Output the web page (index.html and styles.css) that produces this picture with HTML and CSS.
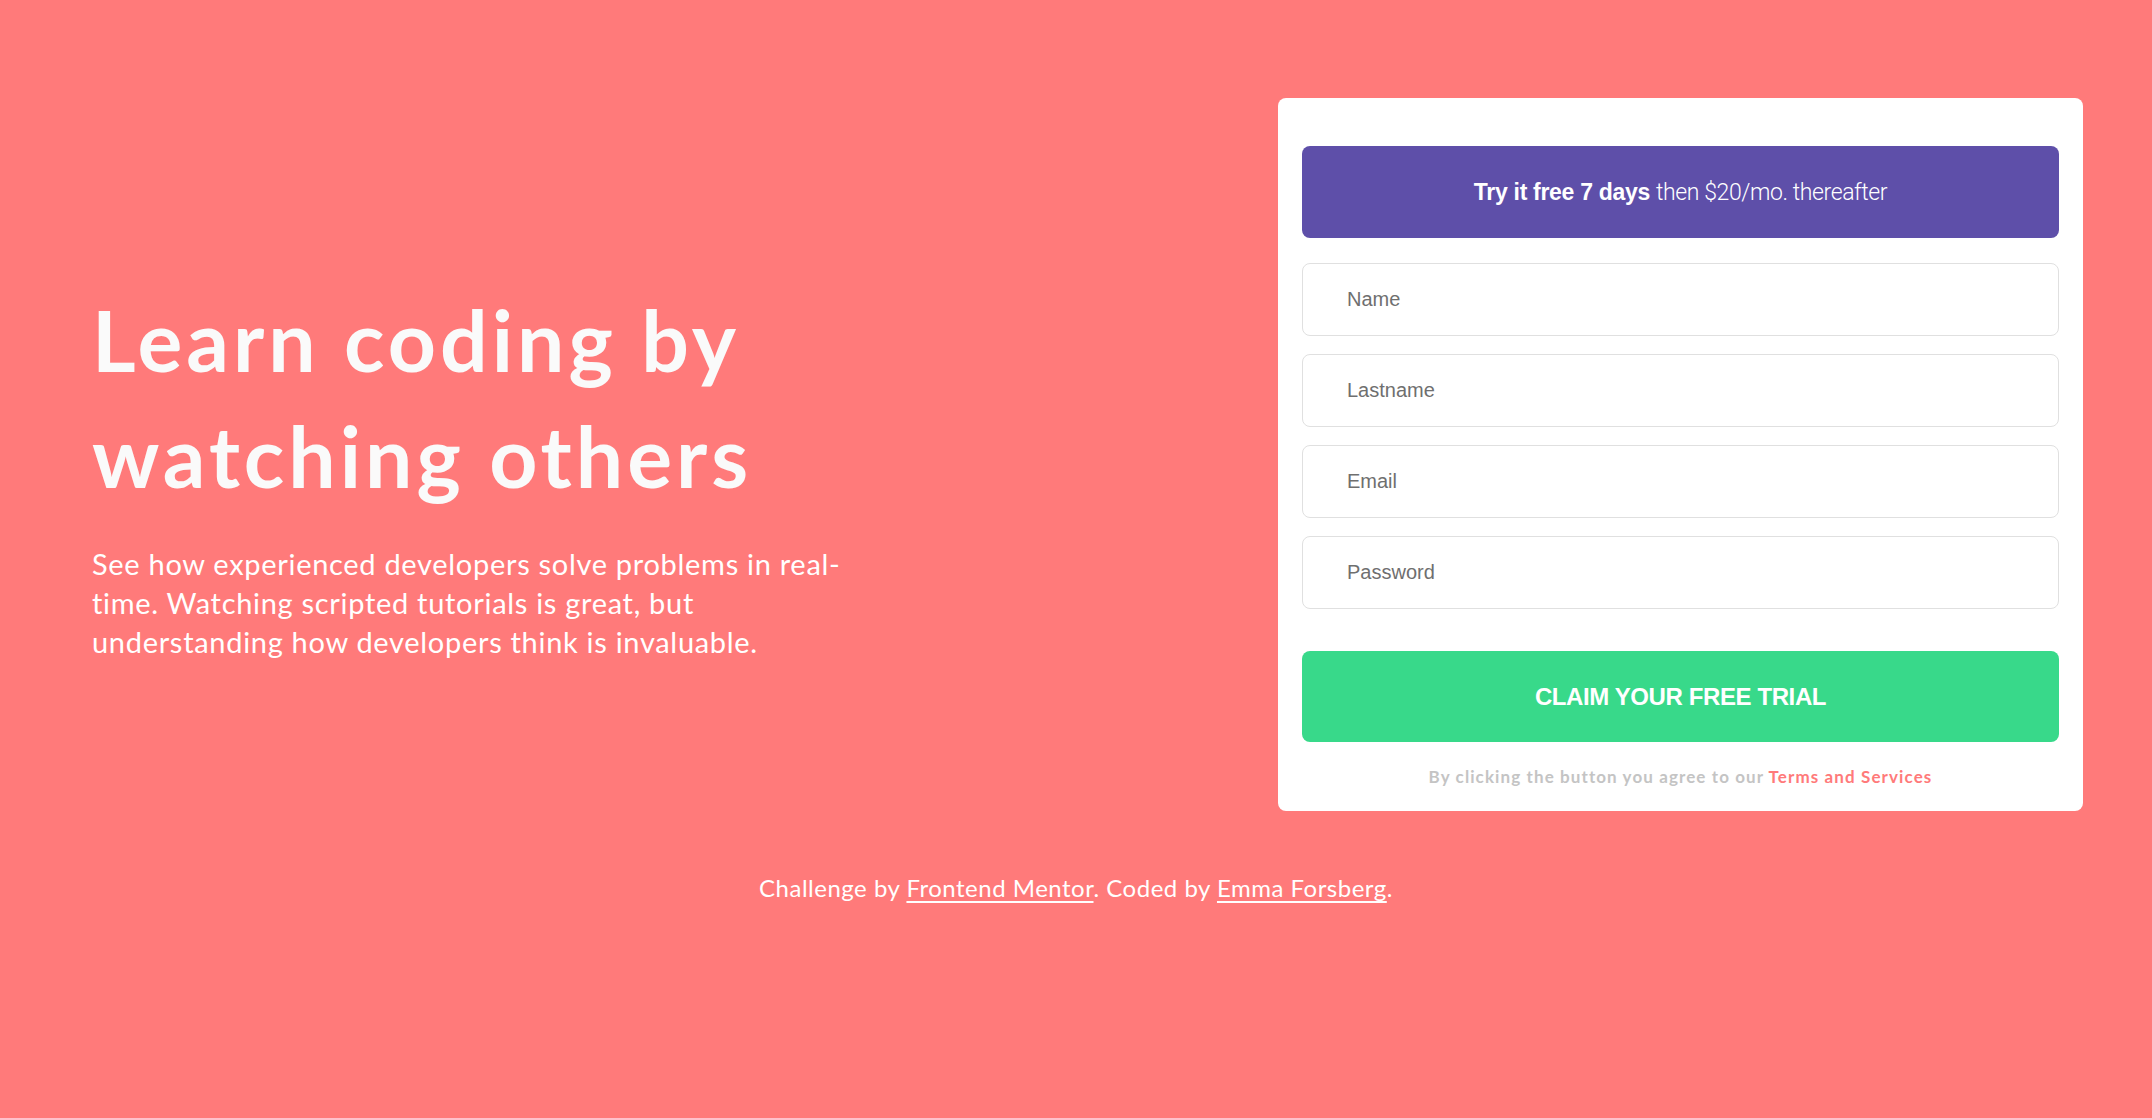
FILE: index.html
```html
<!DOCTYPE html>
<html lang="en">
<head>
<meta charset="utf-8">
<title>Learn coding by watching others</title>
<link rel="stylesheet" href="styles.css">
</head>
<body>
<main class="main">
  <section class="intro">
    <h1 class="intro-title">Learn coding by watching others</h1>
    <p class="intro-text">See how experienced developers solve problems in real-time. Watching scripted tutorials is great, but understanding how developers think is invaluable.</p>
  </section>
  <section class="card">
    <div class="promo"><strong class="promo-strong">Try it free 7 days</strong> <span class="promo-light">then $20/mo. thereafter</span></div>
    <form class="form">
      <input class="field" type="text" placeholder="Name">
      <input class="field" type="text" placeholder="Lastname">
      <input class="field" type="email" placeholder="Email">
      <input class="field" type="password" placeholder="Password">
      <button class="submit" type="button">CLAIM YOUR FREE TRIAL</button>
    </form>
    <p class="terms">By clicking the button you agree to our <a class="terms-link" href="#">Terms and Services</a></p>
  </section>
</main>
<footer class="footer">Challenge by <a class="footer-link" href="#">Frontend Mentor</a>. Coded by <a class="footer-link" href="#">Emma Forsberg</a>.</footer>
</body>
</html>
```

FILE: styles.css
```css
* { box-sizing: border-box; }

body {
  margin: 0;
  background: #ff7a7a;
  color: #ffffff;
  font-family: "Lato", "Liberation Sans", sans-serif;
  min-height: 100vh;
}

.main {
  display: flex;
  align-items: center;
  justify-content: space-between;
  padding: 98px 69px 0 92px;
}

.intro {
  width: 762px;
  margin-top: 33px;
}

.intro-title {
  margin: 0;
  font-size: 84px;
  line-height: 116px;
  font-weight: 700;
  color: #fafafa;
  letter-spacing: 4px;
}

.intro-text {
  margin: 30px 0 0;
  font-size: 29px;
  line-height: 39px;
  font-weight: 400;
  letter-spacing: 0.7px;
}

.card {
  width: 805px;
  background: #ffffff;
  border-radius: 8px;
  padding: 48px 24px 24px;
}

.promo {
  height: 92px;
  background: #5e4fa9;
  border-radius: 8px;
  display: flex;
  align-items: center;
  justify-content: center;
  gap: 6px;
  font-family: "Liberation Sans", Arial, sans-serif;
  font-size: 23px;
  color: #ffffff;
}

.promo-strong {
  font-weight: 700;
  letter-spacing: -0.3px;
}

.promo-light {
  font-family: "Roboto", "Liberation Sans", sans-serif;
  font-weight: 300;
  font-size: 23px;
  letter-spacing: -0.4px;
}

.form {
  margin-top: 25px;
  display: flex;
  flex-direction: column;
  gap: 18px;
}

.field {
  height: 73px;
  border: 1px solid #e0e0e0;
  border-radius: 8px;
  padding: 0 44px;
  font-family: "Liberation Sans", Arial, sans-serif;
  font-size: 20px;
  color: #3d3b48;
  background: #ffffff;
  outline: none;
}

.field::placeholder {
  color: #6f6f6f;
}

.submit {
  margin-top: 24px;
  height: 91px;
  border: none;
  border-radius: 8px;
  background: #38d98a;
  color: #ffffff;
  font-family: "Liberation Sans", Arial, sans-serif;
  font-weight: 700;
  font-size: 24px;
  letter-spacing: -0.4px;
  cursor: pointer;
}

.terms {
  margin: 24px 0 0;
  text-align: center;
  font-size: 17px;
  line-height: 21px;
  font-weight: 700;
  color: #c4c4c4;
  letter-spacing: 1.1px;
}

.terms-link {
  color: #ff7a7a;
  text-decoration: none;
}

.footer {
  margin-top: 60px;
  text-align: center;
  font-size: 24px;
  line-height: 34px;
  letter-spacing: 0.5px;
}

.footer-link {
  color: #ffffff;
  text-decoration: underline;
  text-underline-offset: 4px;
}
```
